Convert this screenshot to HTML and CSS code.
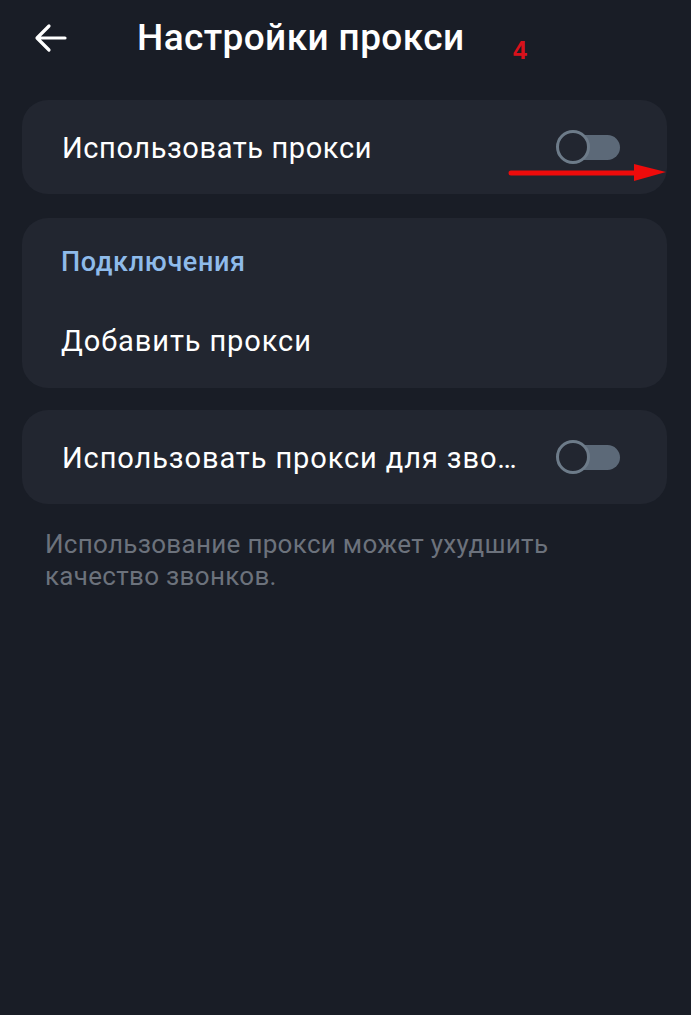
FILE: index.html
```html
<!DOCTYPE html>
<html lang="ru">
<head>
<meta charset="utf-8">
<link rel="stylesheet" href="styles.css">
</head>
<body>
<div class="screen">
  <header class="topbar">
    <svg class="back" width="34" height="30" viewBox="0 0 34 30"><path d="M31 15H4M15 3L3 15l12 12" fill="none" stroke="#ffffff" stroke-width="3.2" stroke-linecap="round" stroke-linejoin="round"/></svg>
    <h1 class="title">Настройки прокси</h1>
    <span class="mark-num">4</span>
  </header>

  <section class="card row">
    <span class="label">Использовать прокси</span>
    <span class="toggle"><span class="knob"></span></span>
    <svg class="mark-arrow" width="160" height="20" viewBox="0 0 160 20"><path d="M3 11H130" stroke="#ee0b0b" stroke-width="5" stroke-linecap="round"/><path d="M126 2L158 10L126 19Z" fill="#ee0b0b"/></svg>
  </section>

  <section class="card group">
    <div class="group-title">Подключения</div>
    <div class="label add">Добавить прокси</div>
  </section>

  <section class="card row">
    <span class="label wide">Использовать прокси для зво…</span>
    <span class="toggle"><span class="knob"></span></span>
  </section>

  <p class="note">Использование прокси может ухудшить качество звонков.</p>
</div>
</body>
</html>
```

FILE: styles.css
```css
html, body {
  margin: 0;
  padding: 0;
  background: #191d26;
}
body {
  font-family: Roboto, "Noto Sans", sans-serif;
  color: #ffffff;
  width: 691px;
  height: 1015px;
  overflow: hidden;
}
.screen {
  padding: 0 24px 0 22px;
  display: flex;
  flex-direction: column;
}
.topbar {
  position: relative;
  height: 78px;
  display: flex;
  align-items: center;
}
.back {
  margin-left: 12px;
  margin-top: -2px;
}
.title {
  margin: -3px 0 0 69px;
  font-size: 37px;
  font-weight: 500;
  letter-spacing: 0.4px;
}
.mark-num {
  position: absolute;
  left: 491px;
  top: 36px;
  color: #d8111b;
  font-size: 25px;
  font-weight: 700;
  font-family: "Liberation Sans", Arial, sans-serif;
}
.card {
  background: #222630;
  border-radius: 26px;
  position: relative;
}
.row {
  height: 94px;
  display: flex;
  align-items: center;
  justify-content: space-between;
  padding: 0 46px 0 40px;
  margin-top: 22px;
}
.label {
  font-size: 29px;
  font-weight: 400;
  color: #ffffff;
  letter-spacing: 0.6px;
  white-space: nowrap;
  margin-top: 1px;
}
.wide {
  letter-spacing: 0.9px;
}
.toggle {
  position: relative;
  width: 64px;
  height: 34px;
  flex: none;
}
.toggle::before {
  content: "";
  position: absolute;
  left: 12px;
  right: 1px;
  top: 5px;
  height: 25px;
  border-radius: 13px;
  background: #5c6978;
}
.knob {
  position: absolute;
  left: -1px;
  top: 0;
  width: 28px;
  height: 28px;
  border: 3px solid #6d7b89;
  border-radius: 50%;
  background: #222630;
}
.mark-arrow {
  position: absolute;
  left: 486px;
  top: 62px;
}
.group {
  margin-top: 24px;
  padding: 28px 40px 0 39px;
  height: 170px;
  box-sizing: border-box;
}
.group-title {
  color: #8fbbea;
  font-size: 27px;
  font-weight: 500;
  letter-spacing: 0.65px;
}
.add {
  margin-top: 46px;
  letter-spacing: 0.9px;
}
.note {
  margin: 24px 0 0 23px;
  color: #6c727c;
  font-size: 26px;
  line-height: 32px;
  letter-spacing: 0.3px;
  max-width: 580px;
}
```
